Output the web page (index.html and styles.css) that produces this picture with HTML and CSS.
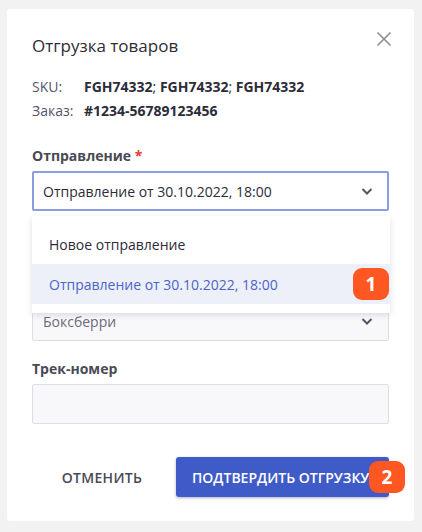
FILE: index.html
```html
<!DOCTYPE html>
<html lang="ru">
<head>
<meta charset="utf-8">
<link rel="stylesheet" href="styles.css">
</head>
<body>
<div class="card">
  <div class="header">
    <h1 class="title">Отгрузка товаров</h1>
    <button class="close" aria-label="Закрыть">
      <svg width="16" height="16" viewBox="0 0 16 16"><path d="M1.5 1.5 L14.5 14.5 M14.5 1.5 L1.5 14.5" stroke="#8b8b96" stroke-width="1.6" fill="none"/></svg>
    </button>
  </div>
  <div class="info">
    <span class="info-key">SKU:</span><span class="info-val">FGH74332<span class="sep">;</span> FGH74332<span class="sep">;</span> FGH74332</span>
    <span class="info-key">Заказ:</span><span class="info-val">#1234-56789123456</span>
  </div>

  <div class="field">
    <div class="label">Отправление <span class="req">*</span></div>
    <div class="select active">
      <span>Отправление от 30.10.2022, 18:00</span>
      <svg class="chev" width="14" height="14" viewBox="0 0 14 14"><path d="M2.5 5 L7 9.5 L11.5 5" stroke="#55556a" stroke-width="2" fill="none"/></svg>
    </div>
    <div class="menu">
      <div class="item">Новое отправление</div>
      <div class="item selected">Отправление от 30.10.2022, 18:00<span class="badge">1</span></div>
    </div>
  </div>

  <div class="field field-2">
    <div class="label-space"></div>
    <div class="select muted">
      <span>Боксберри</span>
      <svg class="chev" width="14" height="14" viewBox="0 0 14 14"><path d="M2.5 5 L7 9.5 L11.5 5" stroke="#55556a" stroke-width="2" fill="none"/></svg>
    </div>
  </div>

  <div class="field field-3">
    <div class="label">Трек-номер</div>
    <div class="input"></div>
  </div>

  <div class="actions">
    <button class="btn btn-cancel">Отменить</button>
    <button class="btn btn-primary">Подтвердить отгрузку<span class="badge badge-2">2</span></button>
  </div>
</div>
</body>
</html>
```
FILE: styles.css
```css
* { box-sizing: border-box; }
html, body { margin: 0; padding: 0; }
body {
  background: #f2f2f3;
  font-family: "Open Sans", "Noto Sans", sans-serif;
  color: #2c2c38;
  width: 422px;
  height: 532px;
  overflow: hidden;
}
.card {
  margin: 9px 8px 0 7px;
  height: 512px;
  background: #fff;
  border-radius: 3px;
  padding: 26px 25px 24px 25px;
  position: relative;
}
.header {
  display: flex;
  justify-content: space-between;
  align-items: flex-start;
  height: 22px;
}
.title {
  margin: 0;
  font-size: 17px;
  line-height: 22px;
  font-weight: 400;
  color: #2c2c38;
}
.close {
  border: 0;
  background: none;
  padding: 0;
  margin: -4px -3px 0 0;
  width: 16px;
  height: 16px;
  display: flex;
}
.info {
  margin-top: 20px;
  display: grid;
  grid-template-columns: 52px auto;
  row-gap: 4px;
  font-size: 14px;
  line-height: 20px;
}
.info-key { color: #55556a; }
.info-val { font-weight: 700; color: #2c2c38; }
.sep { font-weight: 400; }
.field { position: relative; margin-top: 25px; }
.field-2 { margin-top: 65px; }
.field-3 { margin-top: 18px; }
.label {
  font-size: 14px;
  line-height: 20px;
  font-weight: 700;
  color: #4a4a55;
  margin-bottom: 5px;
}
.label-space { height: 20px; margin-bottom: 5px; }
.req { color: #e53935; }
.select, .input {
  height: 40px;
  width: 357px;
  border: 1px solid #dddde4;
  background: #f8f8fa;
  border-radius: 2px;
  display: flex;
  align-items: center;
  justify-content: space-between;
  padding: 0 14px 0 10px;
  font-size: 14px;
}
.select.active {
  background: #fff;
  border: 2px solid #8d9be0;
  padding-left: 9px;
  padding-right: 13px;
  color: #2c2c38;
}
.select.muted { color: #6b6b78; }
.chev { display: block; }
.menu {
  position: absolute;
  top: 70px;
  left: 0;
  width: 358px;
  background: #fff;
  box-shadow: 0 2px 6px rgba(40, 40, 70, 0.14);
  padding: 8px 0 9px 0;
  z-index: 5;
}
.item {
  height: 40px;
  display: flex;
  align-items: center;
  justify-content: space-between;
  padding: 0 1px 0 17px;
  font-size: 14px;
  color: #2c2c38;
}
.item.selected {
  background: #eef0f9;
  color: #4a64c8;
}
.badge {
  display: inline-flex;
  align-items: center;
  justify-content: center;
  width: 36px;
  height: 32px;
  border-radius: 9px;
  background: #ff5722;
  color: #fff;
  font-weight: 700;
  font-size: 19px;
  letter-spacing: 0;
  font-family: "Open Sans", sans-serif;
}
.actions {
  margin-top: 33px;
  display: flex;
  gap: 4px;
}
.btn {
  height: 40px;
  border: 0;
  border-radius: 3px;
  font-family: "Open Sans", "Noto Sans", sans-serif;
  font-size: 14px;
  font-weight: 600;
  text-transform: uppercase;
  letter-spacing: 0.3px;
  padding: 0;
}
.btn-cancel {
  width: 140px;
  background: transparent;
  color: #4a4a55;
}
.btn-primary {
  width: 213px;
  background: #3f5bc7;
  color: #fff;
  position: relative;
  text-align: left;
  padding-left: 16px;
  letter-spacing: 0;
  box-shadow: 0 1px 3px rgba(30, 40, 90, 0.35);
  white-space: nowrap;
}
.badge-2 {
  position: absolute;
  right: -16px;
  top: 4px;
  text-transform: none;
}
```
